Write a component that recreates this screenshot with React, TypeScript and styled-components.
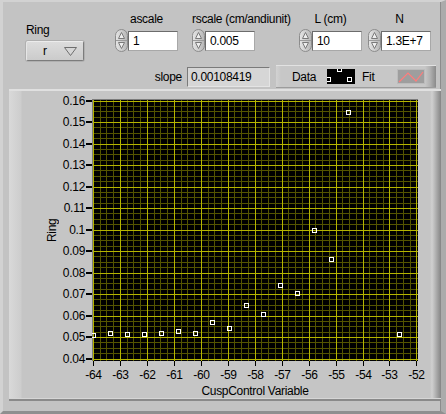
import React from 'react';
import styled, { createGlobalStyle } from 'styled-components';

const FONT = `"Liberation Sans", Arial, sans-serif`;

const Global = createGlobalStyle`
  html, body { margin: 0; padding: 0; background: #c3c3c3; }
  body { font-family: ${FONT}; }
`;

const Window = styled.div`
  box-sizing: border-box;
  width: 446px;
  height: 414px;
  background: #c3c3c3;
  border-left: 3px solid #d2d2d2;
  border-top: 2px solid #d2d2d2;
  border-right: 5px solid #ababab;
  border-bottom: 3px solid #8f8f8f;
  box-shadow: inset -1px 0 0 #8c8c8c;
  display: flex;
  flex-direction: column;
  font: 12px/14px ${FONT};
  letter-spacing: -0.3px;
  color: #000;
  overflow: hidden;
`;

const TopRow = styled.div`
  display: flex;
  align-items: flex-start;
  padding-top: 10px;
  height: 49px;
`;

const RingColumn = styled.div`
  display: flex;
  flex-direction: column;
  margin: 11px 0 0 23px;
  width: 58px;
`;

const Label = styled.div<{ $align?: string }>`
  height: 14px;
  white-space: nowrap;
  text-align: ${(p) => p.$align || 'left'};
`;

const RingButton = styled.div`
  box-sizing: border-box;
  margin-top: 4px;
  width: 58px;
  height: 20px;
  display: flex;
  align-items: center;
  justify-content: space-between;
  padding: 0 6px 0 16px;
  background: linear-gradient(to bottom, #dcdcdc, #cbcbcb);
  border: 1px solid;
  border-color: #ececec #7c7c7c #7c7c7c #e6e6e6;
  border-radius: 2px;
  box-shadow: 0 0 0 1px #b0b0b0;
`;

const NumCol = styled.div<{ $ml: number; $w: number }>`
  display: flex;
  flex-direction: column;
  margin-left: ${(p) => p.$ml}px;
  width: ${(p) => p.$w}px;
`;

const ControlRow = styled.div`
  display: flex;
  align-items: flex-start;
  margin-top: 3px;
  height: 23px;
`;

const NumBox = styled.div`
  box-sizing: border-box;
  margin-top: 2px;
  width: 50px;
  height: 20px;
  padding-left: 4px;
  line-height: 18px;
  background: #fff;
  border: 1px solid;
  border-color: #6c6c6c #a8a8a8 #a8a8a8 #6c6c6c;
  white-space: nowrap;
`;

const SecondRow = styled.div`
  display: flex;
  align-items: center;
  margin-top: 4px;
  height: 23px;
`;

const SlopeLabel = styled.div`
  width: 179px;
  text-align: right;
`;

const Indicator = styled.div`
  box-sizing: border-box;
  margin-left: 5px;
  width: 83px;
  height: 20px;
  padding-left: 3px;
  line-height: 18px;
  background: #d6d6d6;
  border: 1px solid;
  border-color: #7a7a7a #e4e4e4 #e4e4e4 #7a7a7a;
`;

const Legend = styled.div`
  box-sizing: border-box;
  margin-left: 6px;
  width: 160px;
  height: 23px;
  display: flex;
  align-items: center;
  padding-left: 16px;
  background: linear-gradient(
    to right,
    #d2d2d2 0,
    #c7c7c7 5px,
    #c7c7c7 calc(100% - 11px),
    #b2b2b2 calc(100% - 6px),
    #8a8a8a 100%
  );
  border-top: 1px solid #e2e2e2;
  border-bottom: 1px solid #9c9c9c;
`;

const LegendEntry = styled.div<{ $ml?: number }>`
  display: flex;
  align-items: center;
  margin-left: ${(p) => p.$ml || 0}px;
`;

const LegendLabel = styled.span`
  width: 35px;
`;

const Swatch = styled.div<{ $bg: string }>`
  box-sizing: border-box;
  width: 28px;
  height: 15px;
  background: ${(p) => p.$bg};
  display: flex;
  svg { display: block; }
`;

const GraphFrame = styled.div`
  box-sizing: border-box;
  margin: 1px 0 0 6px;
  width: 432px;
  height: 312px;
  display: grid;
  grid-template-columns: 14px 33px 326px;
  grid-template-rows: 262px 22px 16px;
  padding: 8px 0 0 36px;
  background: linear-gradient(
    to right,
    #d9d9d9 0,
    #cdcdcd 12px,
    #c5c5c5 13px,
    #c5c5c5 calc(100% - 11px),
    #d0d0d0 calc(100% - 9px),
    #a6a6a6 calc(100% - 4px),
    #858585 100%
  );
  border-top: 2px solid #e0e0e0;
  border-bottom: 2px solid #8a8a8a;
  box-shadow: inset 0 -1px 0 #d6d6d6;
`;

const YTitle = styled.div`
  grid-row: 1;
  grid-column: 1;
  display: flex;
  align-items: center;
  justify-content: center;
  writing-mode: vertical-rl;
  transform: rotate(180deg);
`;

const YAxis = styled.div`
  grid-row: 1;
  grid-column: 2;
  position: relative;
`;

const YTick = styled.div`
  position: absolute;
  right: 0;
  height: 14px;
  padding-right: 7px;
  white-space: nowrap;
  &::after {
    content: '';
    position: absolute;
    right: 0;
    top: 6px;
    width: 6px;
    height: 2px;
    background: #000;
  }
`;

const Plot = styled.div`
  grid-row: 1;
  grid-column: 3;
  background: #000;
  svg { display: block; }
`;

const XAxis = styled.div`
  grid-row: 2;
  grid-column: 3;
  position: relative;
`;

const XTick = styled.div`
  position: absolute;
  top: 0;
  width: 41px;
  padding-top: 7px;
  text-align: center;
  white-space: nowrap;
  &::before {
    content: '';
    position: absolute;
    left: 20px;
    top: 0;
    width: 1px;
    height: 5px;
    background: #000;
  }
`;

const XTitle = styled.div`
  grid-row: 3;
  grid-column: 3;
  text-align: center;
  line-height: 16px;
`;

/* ---------- chart mapping ---------- */
const XMIN = -64;
const XSCALE = 26.95;
const X0 = 1.5;
const YMAX = 0.16;
const YSCALE = 2150;
const Y0 = 2;
const W = 326;
const H = 262;

const colOf = (v: number) => Math.floor(X0 + (v - XMIN) * XSCALE + 1e-6);
const rowOf = (v: number) => Math.round(Y0 + (YMAX - v) * YSCALE);

const yData = [
  0.0512, 0.052, 0.0515, 0.0515, 0.052, 0.0529, 0.052, 0.0571, 0.0543, 0.065,
  0.0608, 0.0743, 0.0706, 0.1, 0.0864, 0.1548,
];
const points: [number, number][] = [
  ...yData.map((y, k) => [XMIN + (k * 17) / XSCALE, y] as [number, number]),
  [XMIN + (18 * 17) / XSCALE, 0.0515],
];

const majorCols = Array.from({ length: 13 }, (_, i) => Math.floor(X0 + i * XSCALE));
const minorCols = Array.from({ length: 49 }, (_, i) => i)
  .filter((i) => i % 4 !== 0)
  .map((i) => Math.floor(X0 + (i / 4) * XSCALE));
const majorRows = Array.from({ length: 13 }, (_, j) => Math.floor(Y0 + j * 21.5));
const minorRows = Array.from({ length: 49 }, (_, i) => i)
  .filter((i) => i % 4 !== 0)
  .map((i) => Math.floor(Y0 + i * 5.375));

function Spinner() {
  return (
    <svg width="13" height="23" viewBox="0 0 13 23">
      <defs>
        <linearGradient id="spinGrad" x1="0" x2="1" y1="0" y2="0">
          <stop offset="0" stopColor="#e6e6e6" />
          <stop offset="1" stopColor="#b6b6b6" />
        </linearGradient>
      </defs>
      <rect x="0.5" y="0.5" width="12" height="22" rx="6" fill="url(#spinGrad)" stroke="#8c8c8c" />
      <line x1="1" y1="11.5" x2="12" y2="11.5" stroke="#9c9c9c" />
      <path d="M3.5 9.5 L6.5 3.5 L9.5 9.5 Z" fill="#eeeeee" stroke="#7a7a7a" />
      <path d="M3.5 13.5 L6.5 19.5 L9.5 13.5 Z" fill="#eeeeee" stroke="#7a7a7a" />
    </svg>
  );
}

function Numeric(props: { label: string; value: string; ml: number; w: number; align?: string }) {
  return (
    <NumCol $ml={props.ml} $w={props.w}>
      <Label $align={props.align || 'center'}>{props.label}</Label>
      <ControlRow>
        <Spinner />
        <NumBox>{props.value}</NumBox>
      </ControlRow>
    </NumCol>
  );
}

function PlotArea() {
  return (
    <svg width={W} height={H} viewBox={`0 0 ${W} ${H}`} shapeRendering="crispEdges">
      {minorCols.map((c, i) => (
        <line key={'mc' + i} x1={c + 0.5} y1={0} x2={c + 0.5} y2={H} stroke="#545400" />
      ))}
      {minorRows.map((r, i) => (
        <line key={'mr' + i} x1={0} y1={r + 0.5} x2={W} y2={r + 0.5} stroke="#545400" />
      ))}
      {majorCols.map((c, i) => (
        <line key={'Mc' + i} x1={c + 0.5} y1={0} x2={c + 0.5} y2={H} stroke="#b4b400" />
      ))}
      {majorRows.map((r, i) => (
        <line key={'Mr' + i} x1={0} y1={r + 0.5} x2={W} y2={r + 0.5} stroke="#b4b400" />
      ))}
      <line x1={0.5} y1={0} x2={0.5} y2={H} stroke="#7c7c7c" />
      <line x1={0} y1={0.5} x2={W} y2={0.5} stroke="#7c7c7c" />
      {points.map(([x, y], i) => {
        const c = colOf(x);
        const r = rowOf(y);
        return (
          <rect
            key={'p' + i}
            x={c - 1.5}
            y={r - 1.5}
            width={4}
            height={4}
            fill="none"
            stroke="#ffffff"
          />
        );
      })}
    </svg>
  );
}

export default function App() {
  return (
    <>
      <Global />
      <Window>
        <TopRow>
          <RingColumn>
            <Label>Ring</Label>
            <RingButton>
              <span>r</span>
              <svg width="13" height="9" viewBox="0 0 13 9">
                <path d="M0.5 0.5 L12.5 0.5 L6.5 8.5 Z" fill="#d6d6d6" stroke="#6e6e6e" />
              </svg>
            </RingButton>
          </RingColumn>
          <Numeric label="ascale" value="1" ml={31} w={63} />
          <Numeric label="rscale (cm/andiunit)" value="0.005" ml={14} w={107} align="left" />
          <Numeric label="L (cm)" value="10" ml={0} w={63} />
          <Numeric label="N" value="1.3E+7" ml={6} w={63} />
        </TopRow>
        <SecondRow>
          <SlopeLabel>slope</SlopeLabel>
          <Indicator>0.00108419</Indicator>
          <Legend>
            <LegendEntry>
              <LegendLabel>Data</LegendLabel>
              <Swatch $bg="#000">
                <svg width="28" height="15" viewBox="0 0 28 15" shapeRendering="crispEdges">
                  <rect x="10.5" y="-1.5" width="4" height="4" fill="none" stroke="#fff" />
                  <rect x="-0.5" y="8.5" width="4" height="4" fill="none" stroke="#fff" />
                  <rect x="20.5" y="8.5" width="4" height="4" fill="none" stroke="#fff" />
                </svg>
              </Swatch>
            </LegendEntry>
            <LegendEntry $ml={7}>
              <LegendLabel>Fit</LegendLabel>
              <Swatch $bg="#9e9e9e">
                <svg width="28" height="15" viewBox="0 0 28 15">
                  <rect x="0.5" y="0.5" width="27" height="14" fill="none" stroke="#bcbcbc" />
                  <polyline points="2,13 11,4 19,12 26,3" fill="none" stroke="#ff7c7c" strokeWidth="1.2" />
                </svg>
              </Swatch>
            </LegendEntry>
          </Legend>
        </SecondRow>
        <GraphFrame>
          <YTitle>Ring</YTitle>
          <YAxis>
            {majorRows.map((r, j) => (
              <YTick key={j} style={{ top: r - 7 }}>
                {parseFloat((0.16 - j * 0.01).toFixed(2)).toString()}
              </YTick>
            ))}
          </YAxis>
          <Plot>
            <PlotArea />
          </Plot>
          <XAxis>
            {majorCols.map((c, i) => (
              <XTick key={i} style={{ left: c - 20 }}>
                {String(XMIN + i)}
              </XTick>
            ))}
          </XAxis>
          <XTitle>CuspControl Variable</XTitle>
        </GraphFrame>
      </Window>
    </>
  );
}
